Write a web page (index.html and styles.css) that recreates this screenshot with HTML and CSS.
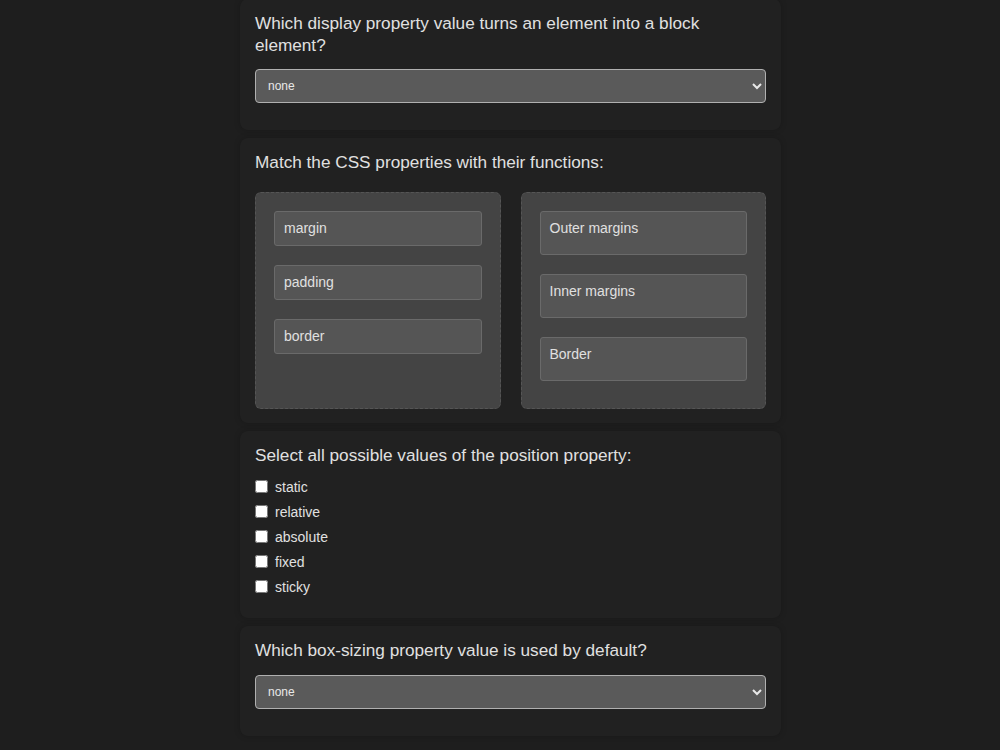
FILE: index.html
```html
<!DOCTYPE html>
<html>
<head>
    <title>CSS Quiz</title>
    <link rel="stylesheet" href="styles.css">
</head>
<body>
    <div class="quiz">
        <div class="card">
            <p class="question">Which display property value turns an element into a block element?</p>
            <select class="answer-select">
                <option>none</option>
                <option>block</option>
                <option>inline</option>
                <option>inline-block</option>
            </select>
        </div>

        <div class="card">
            <p class="question">Match the CSS properties with their functions:</p>
            <div class="match">
                <div class="match-column">
                    <div class="match-item">margin</div>
                    <div class="match-item">padding</div>
                    <div class="match-item">border</div>
                </div>
                <div class="match-column">
                    <div class="match-item tall">Outer margins</div>
                    <div class="match-item tall">Inner margins</div>
                    <div class="match-item tall">Border</div>
                </div>
            </div>
        </div>

        <div class="card card-options">
            <p class="question">Select all possible values of the position property:</p>
            <div class="options">
                <label class="option"><input type="checkbox"> static</label>
                <label class="option"><input type="checkbox"> relative</label>
                <label class="option"><input type="checkbox"> absolute</label>
                <label class="option"><input type="checkbox"> fixed</label>
                <label class="option"><input type="checkbox"> sticky</label>
            </div>
        </div>

        <div class="card card-last">
            <p class="question">Which box-sizing property value is used by default?</p>
            <select class="answer-select">
                <option>none</option>
                <option>content-box</option>
                <option>border-box</option>
            </select>
        </div>
    </div>
</body>
</html>
```

FILE: styles.css
```css
body {
    margin: 0;
    background-color: #1e1e1e;
    color: #e0e0e0;
    font-family: "Liberation Sans", Arial, sans-serif;
}

.quiz {
    width: 541px;
    margin: -1px 0 0 240px;
}

.card {
    background-color: #212121;
    border-radius: 8px;
    box-shadow: 0 0 6px rgba(0, 0, 0, 0.2);
    padding: 13px 15px 14px;
    margin-bottom: 8px;
}

.question {
    font-size: 17.2px;
    line-height: 22px;
    margin: 0 0 13px;
}

.card-last .question {
    margin-bottom: 14px;
}

.answer-select {
    display: block;
    width: 100%;
    height: 34px;
    margin-bottom: 13px;
    padding: 0 8px;
    font-family: "Liberation Sans", Arial, sans-serif;
    font-size: 12px;
    color: #e8e8e8;
    background-color: #5a5a5a;
    border: 1px solid #b0b0b0;
    border-radius: 4px;
}

.match {
    display: flex;
    gap: 20px;
    margin-top: 19px;
}

.match-column {
    flex: 1;
    display: flex;
    flex-direction: column;
    gap: 19px;
    padding: 18px 18px 27px;
    background-color: #444;
    border: 1px dashed #555;
    border-radius: 6px;
}

.match-item {
    height: 35px;
    box-sizing: border-box;
    padding: 8px 9px;
    font-size: 14px;
    line-height: 17px;
    background-color: #555;
    border: 1px solid #6a6a6a;
    border-radius: 3px;
}

.match-item.tall {
    height: 44px;
}

.card-options .question {
    margin-bottom: 8px;
}

.options {
    padding-bottom: 5px;
}

.option {
    display: flex;
    align-items: center;
    height: 25px;
    font-size: 14px;
}

.option input {
    margin: 0 7px 0 0;
    width: 13px;
    height: 13px;
}
```
